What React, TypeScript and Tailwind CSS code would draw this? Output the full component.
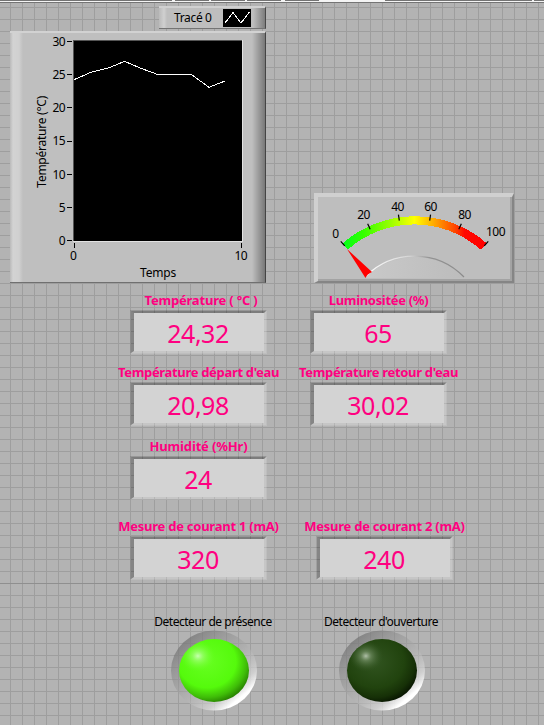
import React from "react";

const PINK = "text-[#ff0080]";

function Readout({ label, value, shift = "" }: { label: string; value: string; shift?: string }) {
  return (
    <div className="flex w-[137px] flex-col items-center">
      <div className={`h-[18px] whitespace-nowrap text-[13px] leading-[18px] font-bold ${PINK} ${shift || "tracking-[-0.32px]"}`}>{label}</div>
      <div className="mt-px h-[44px] w-[137px] border border-t-black/15 border-r-white/15 border-b-white/15 border-l-black/10">
        <div className="h-[42px] w-[135px] border-t-2 border-r-2 border-b-2 border-l-[3px] border-t-black/30 border-r-white/25 border-b-white/25 border-l-black/25">
          <div className={`h-[38px] bg-[#d3d3d3] pt-px pr-[2px] text-center text-[25px] leading-[38px] tracking-[-0.5px] ${PINK}`}>{value}</div>
        </div>
      </div>
    </div>
  );
}

function Led({ label, on }: { label: string; on: boolean }) {
  const id = on ? "on" : "off";
  return (
    <div className="flex w-[86px] flex-col items-center">
      <div className="h-[17px] pr-[2px] text-[12px] leading-[17px] tracking-[-0.48px] whitespace-nowrap text-black">{label}</div>
      <svg width="86" height="81" viewBox="0 0 86 81">
        <defs>
          <linearGradient id={`ring-${id}`} x1="0.15" y1="0.1" x2="0.85" y2="0.9">
            <stop offset="0" stopColor="#757575" stopOpacity="0.8" />
            <stop offset="0.35" stopColor="#929292" stopOpacity="0.5" />
            <stop offset="0.6" stopColor="#b8b8b8" stopOpacity="0.5" />
            <stop offset="0.8" stopColor="#dadada" stopOpacity="0.7" />
            <stop offset="0.93" stopColor="#ffffff" />
          </linearGradient>
          <radialGradient id={`body-${id}`} cx="0.4" cy="0.36" r="0.69">
            <stop offset="0" stopColor={on ? "#66ff20" : "#315420"} />
            <stop offset="0.6" stopColor={on ? "#55fa0c" : "#21430e"} />
            <stop offset="0.82" stopColor={on ? "#3fbd08" : "#163007"} />
            <stop offset="1" stopColor={on ? "#237500" : "#051000"} />
          </radialGradient>
          <radialGradient id={`shine-${id}`} cx="0.27" cy="0.27" r="0.25">
            <stop offset="0" stopColor={on ? "#c8ffb0" : "#b0c0a8"} />
            <stop offset="0.3" stopColor={on ? "#9cff70" : "#708c62"} stopOpacity="0.75" />
            <stop offset="1" stopColor={on ? "#66ff20" : "#315420"} stopOpacity="0" />
          </radialGradient>
        </defs>
        <ellipse cx="43" cy="40.5" rx="43" ry="40" fill={`url(#ring-${id})`} />
        <ellipse cx="43" cy="40.5" rx="35" ry="31.5" fill={`url(#body-${id})`} />
        <ellipse cx="43" cy="40.5" rx="35" ry="31.5" fill={`url(#shine-${id})`} />
      </svg>
    </div>
  );
}

function Legend() {
  return (
    <div className="ml-[149px] flex h-[23px] w-[107px] items-center border-t-2 border-r border-b border-t-[#d0d0d0] border-r-[#484848] border-b-[#747474] bg-[linear-gradient(90deg,#bababa_0,#d0d0d0_5px,#bebebe_8px,#bebebe_94px,#777_107px)] pl-[15px]">
      <span className="w-[49px] pb-px text-[12px] leading-[16px] tracking-[-0.35px] whitespace-nowrap">Tracé 0</span>
      <svg width="28" height="18" viewBox="0 0 28 18" shapeRendering="crispEdges">
        <path d="M0 0H28V18H0Z" fill="#000" />
        <path d="M2 14L10 3.500L18 14L26.500 3" fill="none" stroke="#fff" />
      </svg>
    </div>
  );
}

function Chart() {
  const ticks = [30, 25, 20, 15, 10, 5, 0];
  return (
    <div className="mt-[2px] h-[252px] w-[256px] border-t-2 border-r border-b border-t-[#d2d2d2] border-r-[#444] border-b-[#707070] bg-[linear-gradient(90deg,#bababa_0,#d3d3d3_3px,#d0d0d0_9px,#bfbfbf_13px,#bfbfbf_242px,#727272_256px)] text-[12px] text-black">
      <div className="flex h-[217px]">
        <div className="ml-[22px] flex w-[20px] items-center justify-center">
          <span className="rotate-180 whitespace-nowrap leading-[18px] tracking-[-0.25px] [writing-mode:vertical-rl]">Température (°C)</span>
        </div>
        <div className="flex w-[13px] flex-col">
          {ticks.map((t) => (
            <div key={t} className="flex h-[33.17px] shrink-0 items-start justify-end">
              <span className="text-right leading-[17px] tracking-[-0.6px]">{t}</span>
            </div>
          ))}
        </div>
        <svg className="shrink-0" width="178" height="217" viewBox="65 33 178 217" shapeRendering="crispEdges">
          <path d="M73 40H243V242H73Z" fill="#e2e2e2" />
          <path d="M73 40H242V241H73Z" fill="#555" />
          <path d="M74 41H242V241H74Z" fill="#000" />
          {ticks.map((t) => (
            <path key={t} d={`M67 ${Math.round(240 - t * 6.63) + 0.5}h5`} stroke="#000" />
          ))}
          <path d="M74.500 243v5M241.500 243v5" stroke="#000" />
          <path d="M74 79.700L91.700 72L108.300 68L124.700 61.300L140 68L157.700 74.500H191.300L209 87.300L225 81" fill="none" stroke="#fff" />
        </svg>
      </div>
      <div className="ml-[59px] flex h-[14px] w-[178px] justify-between leading-[12px]">
        <span className="pl-px">0</span>
        <span className="tracking-[-0.6px]">10</span>
      </div>
      <div className="ml-[130px] leading-[18px] tracking-[-0.15px]">Temps</div>
    </div>
  );
}

function Meter() {
  const labels: [string, number, number][] = [
    ["0", 335.5, 238], ["20", 363.5, 219], ["40", 397.5, 211], ["60", 430.5, 211], ["80", 464.5, 219], ["100", 495.5, 236],
  ];
  return (
    <div className="h-[90px] w-[200px] border-t-4 border-r-2 border-b-2 border-l-4 border-t-[#d0d0d0] border-r-[#858585] border-b-[#858585] border-l-[#d0d0d0]">
      <div className="h-[84px] w-[194px] border-r-2 border-b-2 border-[#a3a3a3] bg-[#bebebe]">
        <svg width="192" height="82" viewBox="318 197 192 82">
          <defs>
            <linearGradient id="scale" gradientUnits="userSpaceOnUse" x1="343" y1="0" x2="486" y2="0">
              <stop offset="0" stopColor="#00ff18" />
              <stop offset="0.14" stopColor="#34ff00" />
              <stop offset="0.33" stopColor="#98ff00" />
              <stop offset="0.5" stopColor="#ffff00" />
              <stop offset="0.65" stopColor="#ffa000" />
              <stop offset="0.78" stopColor="#ff4800" />
              <stop offset="0.85" stopColor="#ff0800" />
              <stop offset="1" stopColor="#ff0000" />
            </linearGradient>
            <linearGradient id="hub" x1="0" y1="0" x2="1" y2="0">
              <stop offset="0" stopColor="#ffffff" />
              <stop offset="0.45" stopColor="#d4d4d4" />
              <stop offset="0.65" stopColor="#939393" />
              <stop offset="1" stopColor="#8b8b8b" />
            </linearGradient>
            <linearGradient id="dome" x1="0" y1="0" x2="1" y2="0">
              <stop offset="0" stopColor="#c9c9c9" />
              <stop offset="1" stopColor="#bcbcbc" />
            </linearGradient>
          </defs>
          <path d="M342.500 243.500A109.500 109.500 0 0 1 487 243.500L480.500 249.500A100 100 0 0 0 348 249.500Z" fill="url(#scale)" shapeRendering="crispEdges" />
          {[0, 20, 40, 60, 80, 100].map((v) => {
            const a = ((v / 100) * 82.8 - 41.4) * (Math.PI / 180);
            const s = Math.sin(a), c = Math.cos(a);
            return <line key={v} x1={414.5 + 105.5 * s} y1={325 - 105.5 * c} x2={414.5 + 111.5 * s} y2={325 - 111.5 * c} stroke="#000" strokeWidth="1.2" />;
          })}
          <path d="M365 278A69 69 0 0 1 464 278" fill="url(#dome)" />
          <path d="M366 276A69 69 0 0 1 464 277" fill="none" stroke="url(#hub)" strokeWidth="1.2" />
          <path d="M347 249L372 272Q367 274 365.500 278Z" fill="#ff0000" />
          {labels.map(([t, x, y]) => (
            <text key={t} x={x} y={y} textAnchor="middle" fontSize="12" letterSpacing="-0.5">{t}</text>
          ))}
        </svg>
      </div>
    </div>
  );
}

export default function App() {
  return (
    <main className="flex h-[725px] w-[544px] flex-col overflow-hidden bg-[#b3b3b3] bg-[linear-gradient(90deg,transparent_10px,#9e9e9e_10px,#9e9e9e_11px,transparent_11px),linear-gradient(180deg,transparent_7px,#9e9e9e_7px,#9e9e9e_8px,transparent_8px)] bg-[size:12px_12px] font-['Noto_Sans','Open_Sans',sans-serif]">
      <svg className="shrink-0" width="544" height="3" viewBox="0 0 544 3" shapeRendering="crispEdges">
        <path d="M0 0H544V3H0Z" fill="#747474" />
        <path d="M0 1H544V2H0Z" fill="#f4f4f4" />
        <path d="M172 0h3v2h-3ZM209 0h2v2h-2ZM245 0h2v2h-2ZM281 0h4v2h-4ZM319 0h66v2h-66ZM532 0h2v2h-2Z" fill="#f4f4f4" />
      </svg>
      <section className="flex h-[280px] shrink-0 items-end justify-between pr-[30px] pl-[10px]">
        <div className="h-[277px]">
          <Legend />
          <Chart />
        </div>
        <Meter />
      </section>
      <section className="mt-[8px] flex h-[63px] shrink-0 gap-[43px] pl-[130px]">
        <Readout label="Température ( °C )" value="24,32" shift="pl-[5px] tracking-[-0.2px]" />
        <Readout label="Luminositée (%)" value="65" />
      </section>
      <section className="mt-[9px] flex h-[63px] shrink-0 gap-[43px] pl-[130px]">
        <Readout label="Température départ d'eau" value="20,98" />
        <Readout label="Température retour d'eau" value="30,02" />
      </section>
      <section className="mt-[11px] flex h-[63px] shrink-0 pl-[130px]">
        <Readout label="Humidité (%Hr)" value="24" shift="tracking-[-0.15px]" />
      </section>
      <section className="mt-[17px] flex h-[63px] shrink-0 gap-[49px] pl-[130px]">
        <Readout label="Mesure de courant 1 (mA)" value="320" shift="tracking-[-0.25px]" />
        <Readout label="Mesure de courant 2 (mA)" value="240" shift="tracking-[-0.25px]" />
      </section>
      <hr className="mt-[3px] h-px shrink-0 border-0 bg-[#8f8f8f]" />
      <section className="mt-[29px] flex shrink-0 gap-[82px] pl-[171px]">
        <Led label="Detecteur de présence" on />
        <Led label="Detecteur d'ouverture" on={false} />
      </section>
    </main>
  );
}
